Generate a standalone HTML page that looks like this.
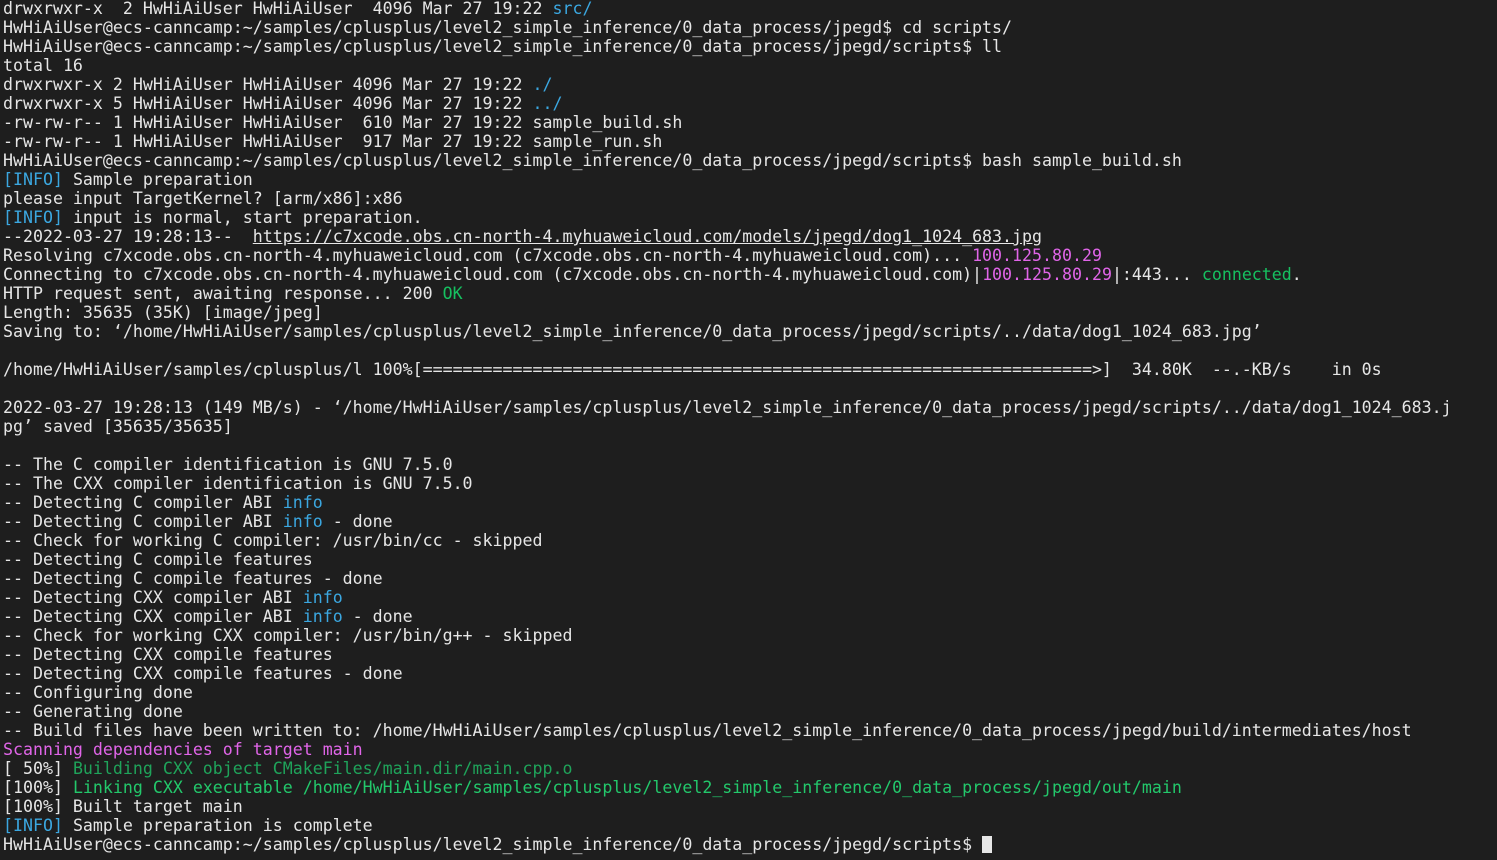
<!DOCTYPE html>
<html><head><meta charset="utf-8"><style>
html,body{margin:0;padding:0;background:#1e1e1e;width:1497px;height:860px;overflow:hidden}
pre{margin:0;position:absolute;left:3px;top:-1px;font-family:"DejaVu Sans Mono","Liberation Mono",monospace;font-size:16.6px;line-height:19px;color:#e6e6e6;white-space:pre}
.b{color:#3ba7e0}.m{color:#e065e8}.g{color:#16c060}.dg{color:#1fa35a}.lg{color:#23c86b}.u{text-decoration:underline}
.cur{display:inline-block;width:10px;height:17px;background:#e6e6e6;vertical-align:-3px}
</style></head><body><pre>drwxrwxr-x  2 HwHiAiUser HwHiAiUser  4096 Mar 27 19:22 <span class="b">src/</span>
HwHiAiUser@ecs-canncamp:~/samples/cplusplus/level2_simple_inference/0_data_process/jpegd$ cd scripts/
HwHiAiUser@ecs-canncamp:~/samples/cplusplus/level2_simple_inference/0_data_process/jpegd/scripts$ ll
total 16
drwxrwxr-x 2 HwHiAiUser HwHiAiUser 4096 Mar 27 19:22 <span class="b">./</span>
drwxrwxr-x 5 HwHiAiUser HwHiAiUser 4096 Mar 27 19:22 <span class="b">../</span>
-rw-rw-r-- 1 HwHiAiUser HwHiAiUser  610 Mar 27 19:22 sample_build.sh
-rw-rw-r-- 1 HwHiAiUser HwHiAiUser  917 Mar 27 19:22 sample_run.sh
HwHiAiUser@ecs-canncamp:~/samples/cplusplus/level2_simple_inference/0_data_process/jpegd/scripts$ bash sample_build.sh
<span class="b">[INFO]</span> Sample preparation
please input TargetKernel? [arm/x86]:x86
<span class="b">[INFO]</span> input is normal, start preparation.
--2022-03-27 19:28:13--  <span class="u">https://c7xcode.obs.cn-north-4.myhuaweicloud.com/models/jpegd/dog1_1024_683.jpg</span>
Resolving c7xcode.obs.cn-north-4.myhuaweicloud.com (c7xcode.obs.cn-north-4.myhuaweicloud.com)... <span class="m">100.125.80.29</span>
Connecting to c7xcode.obs.cn-north-4.myhuaweicloud.com (c7xcode.obs.cn-north-4.myhuaweicloud.com)|<span class="m">100.125.80.29</span>|:443... <span class="g">connected</span>.
HTTP request sent, awaiting response... 200 <span class="g">OK</span>
Length: 35635 (35K) [image/jpeg]
Saving to: ‘/home/HwHiAiUser/samples/cplusplus/level2_simple_inference/0_data_process/jpegd/scripts/../data/dog1_1024_683.jpg’

/home/HwHiAiUser/samples/cplusplus/l 100%[===================================================================>]  34.80K  --.-KB/s    in 0s

2022-03-27 19:28:13 (149 MB/s) - ‘/home/HwHiAiUser/samples/cplusplus/level2_simple_inference/0_data_process/jpegd/scripts/../data/dog1_1024_683.j
pg’ saved [35635/35635]

-- The C compiler identification is GNU 7.5.0
-- The CXX compiler identification is GNU 7.5.0
-- Detecting C compiler ABI <span class="b">info</span>
-- Detecting C compiler ABI <span class="b">info</span> - done
-- Check for working C compiler: /usr/bin/cc - skipped
-- Detecting C compile features
-- Detecting C compile features - done
-- Detecting CXX compiler ABI <span class="b">info</span>
-- Detecting CXX compiler ABI <span class="b">info</span> - done
-- Check for working CXX compiler: /usr/bin/g++ - skipped
-- Detecting CXX compile features
-- Detecting CXX compile features - done
-- Configuring done
-- Generating done
-- Build files have been written to: /home/HwHiAiUser/samples/cplusplus/level2_simple_inference/0_data_process/jpegd/build/intermediates/host
<span class="m">Scanning dependencies of target main</span>
[ 50%] <span class="dg">Building CXX object CMakeFiles/main.dir/main.cpp.o</span>
[100%] <span class="lg">Linking CXX executable /home/HwHiAiUser/samples/cplusplus/level2_simple_inference/0_data_process/jpegd/out/main</span>
[100%] Built target main
<span class="b">[INFO]</span> Sample preparation is complete
HwHiAiUser@ecs-canncamp:~/samples/cplusplus/level2_simple_inference/0_data_process/jpegd/scripts$ <span class="cur"></span></pre></body></html>
